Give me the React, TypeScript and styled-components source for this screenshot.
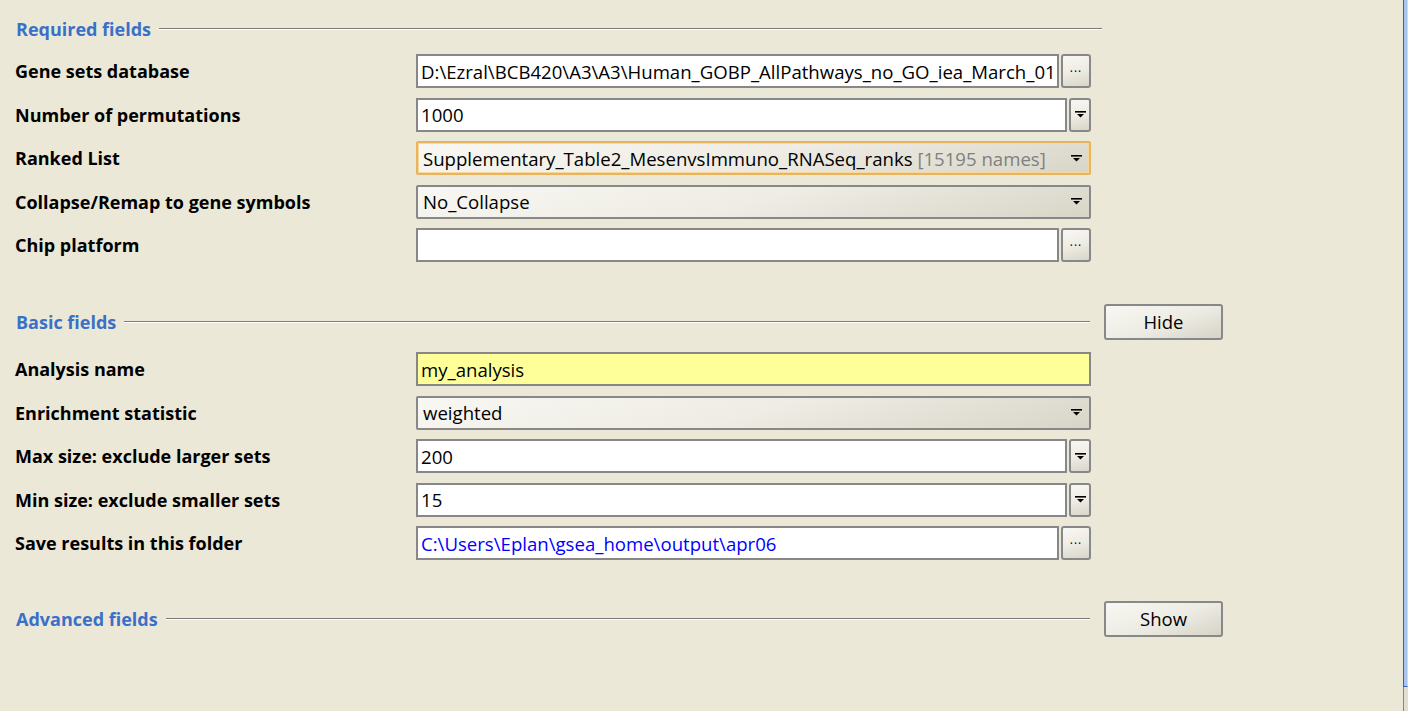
import React from "react";
import styled, { createGlobalStyle, css } from "styled-components";

const Global = createGlobalStyle`
  html, body { margin: 0; padding: 0; background: #ebe8d8; }
  body { font-family: "Open Sans", "Noto Sans", sans-serif; overflow: hidden; }
`;

const Page = styled.div`
  display: flex;
  width: 1408px;
  height: 711px;
  background: #ebe8d8;
`;

const Main = styled.div`
  flex: 1;
  padding: 11px 0 0 15px;
  display: flex;
  flex-direction: column;
`;

const WindowEdge = styled.div`
  width: 5px;
  display: flex;
  flex-direction: column;
`;

const EdgeBlue = styled.div`
  height: 686px;
  border-left: 1px solid #2f62c8;
  border-bottom: 1px solid #2f62c8;
  background: #a9c5ee;
  border-right: 1px solid #cfdcf0;
`;

const EdgeGray = styled.div`
  flex: 1;
  border-left: 1px solid #8a867a;
  background: #e2dfd2;
`;

const Header = styled.div<{ $width: number; $mt: number; $mb: number }>`
  display: flex;
  align-items: center;
  width: ${(p) => p.$width}px;
  height: 35px;
  margin-top: ${(p) => p.$mt}px;
  margin-bottom: ${(p) => p.$mb}px;
`;

const Title = styled.span`
  color: #3a70c8;
  font-weight: 700;
  font-size: 18px;
  padding-left: 1px;
  white-space: nowrap;
`;

const Rule = styled.div`
  flex: 1;
  height: 1px;
  margin-left: 8px;
  background: #7c7c7c;
  border-bottom: 1px solid #ffffff;
`;

const ToggleButton = styled.button`
  width: 119px;
  height: 36px;
  margin-left: 14px;
  border: 2px solid #888888;
  border-radius: 3px;
  background: linear-gradient(160deg, #f8f7f2 0%, #ecebe3 55%, #d6d3c6 100%);
  font-family: "Open Sans", "Noto Sans", sans-serif;
  font-size: 18.5px;
  color: #000;
  padding: 0;
`;

const Rows = styled.div`
  display: grid;
  grid-template-columns: 401px 675px;
  grid-auto-rows: 34px;
  row-gap: 9.5px;
`;

const Label = styled.div`
  display: flex;
  align-items: center;
  font-weight: 700;
  font-size: 18px;
  color: #000;
  white-space: nowrap;
`;

const FieldRow = styled.div`
  display: flex;
  gap: 2px;
  height: 34px;
`;

const TextBox = styled.div<{ $bg?: string; $color?: string }>`
  flex: 1;
  min-width: 0;
  box-sizing: border-box;
  height: 34px;
  border: 2px solid #878787;
  background: ${(p) => p.$bg || "#ffffff"};
  color: ${(p) => p.$color || "#000"};
  font-size: 18.6px;
  display: flex;
  align-items: center;
  padding-left: 3px;
  white-space: nowrap;
  overflow: hidden;
`;

const gradient = css`
  background: linear-gradient(165deg, #f8f7f2 0%, #eeece4 50%, #d8d5c8 100%);
`;

const SideButton = styled.div<{ $w: number }>`
  width: ${(p) => p.$w}px;
  box-sizing: border-box;
  height: 34px;
  border: 2px solid #888888;
  border-radius: 3px;
  ${gradient};
  display: flex;
  align-items: center;
  justify-content: center;
  font-size: 12px;
  color: #000;
`;

const Combo = styled.div<{ $focused?: boolean }>`
  flex: 1;
  box-sizing: border-box;
  height: 34px;
  border: 2px solid ${(p) => (p.$focused ? "#e8b460" : "#888888")};
  border-radius: 2px;
  ${gradient};
  ${(p) =>
    p.$focused &&
    css`
      box-shadow: inset 0 0 0 1px #f6d79c;
    `}
  display: flex;
  align-items: center;
  padding: 0 7px 0 5px;
  font-size: 18.6px;
  white-space: nowrap;
`;

const ComboText = styled.span`
  flex: 1;
`;

const Muted = styled.span`
  color: #808080;
`;

const Arrow = () => (
  <svg width="11" height="7" viewBox="0 0 11 7">
    <rect x="0" y="0" width="11" height="1.6" fill="#000" />
    <path d="M2 3h7l-3.5 3.5z" fill="#000" />
  </svg>
);

const Dots = styled.span`
  letter-spacing: 1px;
`;

export default function App() {
  return (
    <>
      <Global />
      <Page>
        <Main>
          <Header $width={1087} $mt={0} $mb={8}>
            <Title>Required fields</Title>
            <Rule />
          </Header>
          <Rows>
            <Label>Gene sets database</Label>
            <FieldRow>
              <TextBox>D:\Ezral\BCB420\A3\A3\Human_GOBP_AllPathways_no_GO_iea_March_01</TextBox>
              <SideButton $w={30}><Dots>···</Dots></SideButton>
            </FieldRow>
            <Label>Number of permutations</Label>
            <FieldRow>
              <TextBox>1000</TextBox>
              <SideButton $w={22}><Arrow /></SideButton>
            </FieldRow>
            <Label>Ranked List</Label>
            <FieldRow>
              <Combo $focused>
                <ComboText>
                  Supplementary_Table2_MesenvsImmuno_RNASeq_ranks <Muted>[15195 names]</Muted>
                </ComboText>
                <Arrow />
              </Combo>
            </FieldRow>
            <Label>Collapse/Remap to gene symbols</Label>
            <FieldRow>
              <Combo>
                <ComboText>No_Collapse</ComboText>
                <Arrow />
              </Combo>
            </FieldRow>
            <Label>Chip platform</Label>
            <FieldRow>
              <TextBox></TextBox>
              <SideButton $w={30}><Dots>···</Dots></SideButton>
            </FieldRow>
          </Rows>

          <Header $width={1208} $mt={42} $mb={13}>
            <Title>Basic fields</Title>
            <Rule />
            <ToggleButton>Hide</ToggleButton>
          </Header>
          <Rows>
            <Label>Analysis name</Label>
            <FieldRow>
              <TextBox $bg="#ffff99">my_analysis</TextBox>
            </FieldRow>
            <Label>Enrichment statistic</Label>
            <FieldRow>
              <Combo>
                <ComboText>weighted</ComboText>
                <Arrow />
              </Combo>
            </FieldRow>
            <Label>Max size: exclude larger sets</Label>
            <FieldRow>
              <TextBox>200</TextBox>
              <SideButton $w={22}><Arrow /></SideButton>
            </FieldRow>
            <Label>Min size: exclude smaller sets</Label>
            <FieldRow>
              <TextBox>15</TextBox>
              <SideButton $w={22}><Arrow /></SideButton>
            </FieldRow>
            <Label>Save results in this folder</Label>
            <FieldRow>
              <TextBox $color="#0000ff">C:\Users\Eplan\gsea_home\output\apr06</TextBox>
              <SideButton $w={30}><Dots>···</Dots></SideButton>
            </FieldRow>
          </Rows>

          <Header $width={1208} $mt={41} $mb={0}>
            <Title>Advanced fields</Title>
            <Rule />
            <ToggleButton>Show</ToggleButton>
          </Header>
        </Main>
        <WindowEdge>
          <EdgeBlue />
          <EdgeGray />
        </WindowEdge>
      </Page>
    </>
  );
}
